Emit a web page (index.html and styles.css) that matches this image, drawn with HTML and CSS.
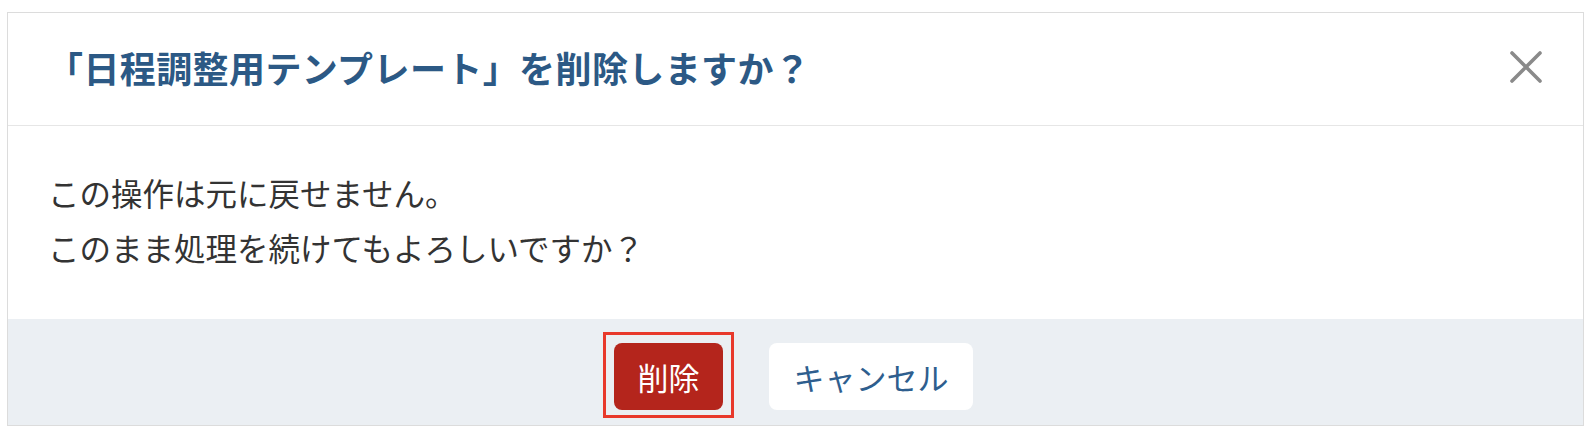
FILE: index.html
```html
<!DOCTYPE html>
<html lang="ja">
<head>
<meta charset="utf-8">
<title>削除確認</title>
<link rel="stylesheet" href="styles.css">
</head>
<body>
<div class="dialog">
  <div class="dialog-header">
    <h1 class="dialog-title">「日程調整用テンプレート」を削除しますか？</h1>
    <button class="close-btn" aria-label="閉じる">
      <svg width="34" height="34" viewBox="0 0 34 34"><path d="M3 3 L31 31 M31 3 L3 31" stroke="#8a8a8a" stroke-width="3.6" stroke-linecap="round" fill="none"/></svg>
    </button>
  </div>
  <div class="dialog-body">
    <p class="msg">この操作は元に戻せません。</p>
    <p class="msg">このまま処理を続けてもよろしいですか？</p>
  </div>
  <div class="dialog-footer">
    <button class="btn btn-danger">削除</button>
    <button class="btn btn-cancel">キャンセル</button>
  </div>
</div>
</body>
</html>
```

FILE: styles.css
```css
* { box-sizing: border-box; }
html, body { margin: 0; padding: 0; background: #ffffff; }
body {
  font-family: "Noto Sans CJK JP", "Noto Sans", sans-serif;
  padding: 12px 10px 12px 7px;
}
.dialog {
  width: 1577px;
  border: 1px solid #dcdcdc;
  background: #ffffff;
}
.dialog-header {
  height: 113px;
  border-bottom: 1px solid #e6e6e6;
  display: flex;
  align-items: center;
  justify-content: space-between;
  padding: 0 40px 5px 39px;
}
.dialog-title {
  margin: 0;
  font-size: 36px;
  letter-spacing: 0.4px;
  font-weight: 700;
  color: #2c5985;
  line-height: 1;
}
.close-btn {
  border: none;
  background: transparent;
  padding: 0;
  width: 34px;
  height: 34px;
  display: flex;
  align-items: center;
  justify-content: center;
  cursor: pointer;
}
.dialog-body {
  height: 193px;
  padding: 39px 40px 0 40px;
}
.msg {
  margin: 0;
  font-size: 31.5px;
  line-height: 55px;
  color: #333333;
}
.dialog-footer {
  height: 106px;
  background: #ebeff3;
  display: flex;
  justify-content: center;
  align-items: flex-start;
  gap: 46px;
  padding-top: 24px;
  padding-right: 4px;
}
.btn {
  font-family: "Noto Sans CJK JP", "Noto Sans", sans-serif;
  font-size: 31px;
  border: none;
  border-radius: 8px;
  height: 67px;
  cursor: pointer;
  line-height: 1;
}
.btn-danger {
  position: relative;
  width: 109px;
  background: #b4251c;
  color: #ffffff;
}
.btn-danger::after {
  content: "";
  position: absolute;
  top: -11px;
  left: -11px;
  right: -11px;
  bottom: -8px;
  border: 3px solid #e8392b;
  pointer-events: none;
}
.btn-cancel {
  width: 204px;
  background: #ffffff;
  color: #2e5e8e;
}
```
